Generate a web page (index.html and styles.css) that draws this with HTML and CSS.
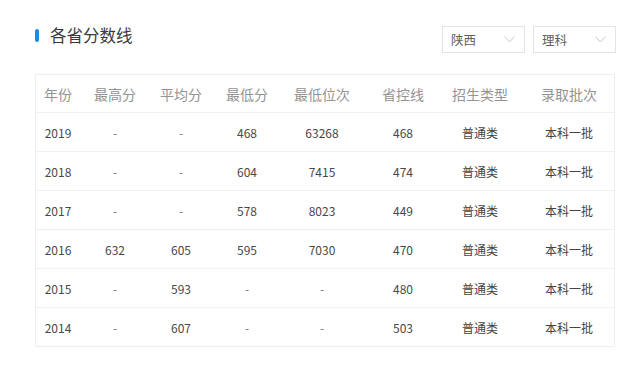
FILE: index.html
```html
<!DOCTYPE html>
<html lang="zh">
<head>
<meta charset="utf-8">
<link rel="stylesheet" href="styles.css">
</head>
<body>
<div class="page">
  <div class="top">
    <div class="title"><span class="bar"></span><span class="title-text">各省分数线</span></div>
    <div class="filters">
      <div class="select"><span>陕西</span><svg width="11" height="7" viewBox="0 0 11 7"><path d="M0.5 0.5 L5.5 6 L10.5 0.5" fill="none" stroke="#c8c8c8" stroke-width="1"/></svg></div>
      <div class="select"><span>理科</span><svg width="11" height="7" viewBox="0 0 11 7"><path d="M0.5 0.5 L5.5 6 L10.5 0.5" fill="none" stroke="#c8c8c8" stroke-width="1"/></svg></div>
    </div>
  </div>
  <div class="table">
    <div class="row head">
      <div>年份</div><div>最高分</div><div>平均分</div><div>最低分</div><div>最低位次</div><div>省控线</div><div>招生类型</div><div class="last">录取批次</div>
    </div>
    <div class="row">
      <div>2019</div><div class="dash">-</div><div class="dash">-</div><div>468</div><div>63268</div><div>468</div><div class="cn">普通类</div><div class="last cn">本科一批</div>
    </div>
    <div class="row">
      <div>2018</div><div class="dash">-</div><div class="dash">-</div><div>604</div><div>7415</div><div>474</div><div class="cn">普通类</div><div class="last cn">本科一批</div>
    </div>
    <div class="row">
      <div>2017</div><div class="dash">-</div><div class="dash">-</div><div>578</div><div>8023</div><div>449</div><div class="cn">普通类</div><div class="last cn">本科一批</div>
    </div>
    <div class="row">
      <div>2016</div><div>632</div><div>605</div><div>595</div><div>7030</div><div>470</div><div class="cn">普通类</div><div class="last cn">本科一批</div>
    </div>
    <div class="row">
      <div>2015</div><div class="dash">-</div><div>593</div><div class="dash">-</div><div class="dash">-</div><div>480</div><div class="cn">普通类</div><div class="last cn">本科一批</div>
    </div>
    <div class="row">
      <div>2014</div><div class="dash">-</div><div>607</div><div class="dash">-</div><div class="dash">-</div><div>503</div><div class="cn">普通类</div><div class="last cn">本科一批</div>
    </div>
  </div>
</div>
</body>
</html>
```
FILE: styles.css
```css
html, body {
  margin: 0;
  padding: 0;
  background: #fff;
}
body {
  font-family: "Noto Sans CJK SC", "Noto Sans", sans-serif;
  color: #333;
}
.page {
  padding: 26px 24px 0 35px;
  width: 581px;
}
.top {
  display: flex;
  justify-content: space-between;
  align-items: flex-start;
  height: 48px;
}
.title {
  display: flex;
  align-items: center;
  height: 20px;
  margin-top: -1px;
}
.bar {
  width: 4px;
  height: 13px;
  border-radius: 2px;
  background: #1a8be6;
  margin-right: 11px;
}
.title-text {
  font-size: 16.5px;
  line-height: 20px;
  color: #3a3a3a;
}
.filters {
  display: flex;
  gap: 8px;
}
.select {
  box-sizing: border-box;
  width: 83px;
  height: 27px;
  border: 1px solid #e3e3e3;
  display: flex;
  align-items: center;
  justify-content: space-between;
  padding: 0 9px 0 8px;
  font-size: 12.5px;
  color: #606060;
}
.select svg {
  display: block;
}
.table {
  width: 580px;
  box-sizing: border-box;
  border: 1px solid #eeeeee;
}
.row {
  display: grid;
  grid-template-columns: 44px 70px 62px 70px 80px 82px 72px 96px;
  height: 39px;
  border-bottom: 1px solid #f0f0f0;
  box-sizing: border-box;
  align-items: center;
  font-size: 12px;
  color: #484848;
}
.row:last-child {
  border-bottom: none;
  height: 38px;
}
.row > div {
  text-align: center;
  white-space: nowrap;
}
.row > .last {
  padding-left: 10px;
}
.head {
  height: 38px;
  font-size: 14px;
  color: #939393;
}
.cn {
  color: #444;
}
.dash {
  color: #777;
}
```
